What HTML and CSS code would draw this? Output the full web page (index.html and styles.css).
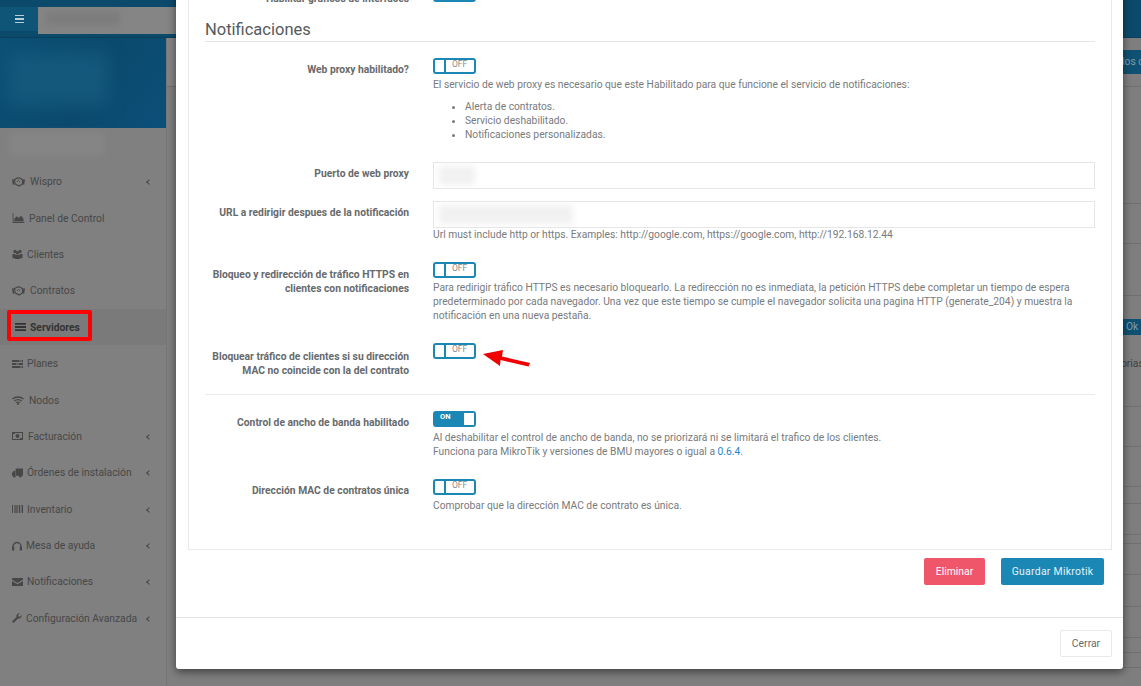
FILE: index.html
```html
<!DOCTYPE html>
<html>

<head>
  <title>Mikrotik</title>
  <link rel="stylesheet" href="styles.css">
</head>

<body>

  <div class="page">
    <div class="topbar">
      <div class="burger"><span></span><span></span><span></span></div>
      <div class="search"><div class="search-blur"></div></div>
    </div>
    <div class="page-body">
      <div class="sidebar">
        <div class="hero"><div class="hero-glow"></div></div>
        <div class="user-blur"></div>
        <ul class="menu">
          <li class="menu-item">
            <svg class="ico ico-w" viewBox="0 0 16 12"><path d="M0 3l2-.5 1 6.5-2 .5zM16 3l-2-.5-1 6.5 2 .5z" /><path d="M3 3c2-1 3-2 5-2s3 1 5 2v5l-4 3-5-2.500z" fill="none" stroke="currentColor" stroke-width="1.400" /><path d="M6 6l2-2 2 2" fill="none" stroke="currentColor" stroke-width="1.200" /></svg>
            <span class="menu-text">Wispro</span><span class="chev"></span>
          </li>
          <li class="menu-item">
            <svg class="ico ico-p" viewBox="0 0 14 12"><path d="M0 0h1v10.500h13V12H0z" /><path d="M2 10V7l3-3 2.500 2L10 3l3 4v3z" /></svg>
            <span class="menu-text">Panel de Control</span>
          </li>
          <li class="menu-item">
            <svg class="ico ico-n" viewBox="0 0 12 12"><circle cx="3" cy="3" r="2" /><circle cx="9" cy="3" r="2" /><circle cx="6" cy="4.500" r="2" /><path d="M0 6h3v5H0zM9 6h3v5H9zM3 7h6v5H3z" /></svg>
            <span class="menu-text">Clientes</span>
          </li>
          <li class="menu-item">
            <svg class="ico ico-w" viewBox="0 0 16 12"><path d="M0 3l2-.5 1 6.5-2 .5zM16 3l-2-.5-1 6.5 2 .5z" /><path d="M3 3c2-1 3-2 5-2s3 1 5 2v5l-4 3-5-2.500z" fill="none" stroke="currentColor" stroke-width="1.400" /><path d="M6 6l2-2 2 2" fill="none" stroke="currentColor" stroke-width="1.200" /></svg>
            <span class="menu-text">Contratos</span>
          </li>
          <li class="menu-item menu-active">
            <svg class="ico ico-s" viewBox="0 0 11 8"><path d="M0 0h11v1.800H0zM0 3.100h11v1.800H0zM0 6.200h11V8H0z" /></svg>
            <span class="menu-text">Servidores</span>
            <div class="red-box"></div>
          </li>
          <li class="menu-item">
            <svg class="ico ico-n" viewBox="0 0 11 8"><path d="M0 0h11v2H0zM0 3h11v2H0zM0 6h11v2H0z" /><path d="M7 .5h3v1H7zM4 3.500h3v1H4zM8 6.500h2v1H8z" fill="#808080" /></svg>
            <span class="menu-text">Planes</span>
          </li>
          <li class="menu-item">
            <svg class="ico ico-wifi" viewBox="0 0 12 9"><path d="M.5 3C3.500.3 8.500.3 11.500 3M2.300 4.900c2-1.800 5.400-1.800 7.400 0M4 6.700c1-.9 3-.9 4 0" fill="none" stroke="currentColor" stroke-width="1.300" /><circle cx="6" cy="8" r="1" /></svg>
            <span class="menu-text">Nodos</span>
          </li>
          <li class="menu-item">
            <svg class="ico ico-f" viewBox="0 0 11 8"><path fill-rule="evenodd" d="M0 0h11v8H0zM1 1v6h9V1z" /><circle cx="5.500" cy="4" r="2" /><path d="M1 1h2v1H1zM8 6h2v1H8z" /></svg>
            <span class="menu-text">Facturación</span><span class="chev"></span>
          </li>
          <li class="menu-item">
            <svg class="ico ico-n" viewBox="0 0 12 10"><path d="M4 0h8v8H4zM0 5l2-2.500h1.500V8H0z" /><circle cx="2.500" cy="8.500" r="1.400" /><circle cx="9" cy="8.500" r="1.400" /></svg>
            <span class="menu-text">Órdenes de instalación</span><span class="chev"></span>
          </li>
          <li class="menu-item">
            <svg class="ico ico-n" viewBox="0 0 11 8"><path d="M0 0h1v8H0zM2 0h.6v8H2zM3.400 0h1.200v8H3.400zM5.400 0h.6v8h-.6zM6.800 0h1.200v8H6.800zM8.800 0h.6v8h-.6zM10 0h1v8h-1z" /></svg>
            <span class="menu-text">Inventario</span><span class="chev"></span>
          </li>
          <li class="menu-item">
            <svg class="ico ico-h" viewBox="0 0 10 9"><path d="M1 6V5a4 4 0 0 1 8 0v1" fill="none" stroke="currentColor" stroke-width="1.300" /><path d="M0 5h2.200v4H0zM7.800 5H10v4H7.800z" /></svg>
            <span class="menu-text">Mesa de ayuda</span><span class="chev"></span>
          </li>
          <li class="menu-item">
            <svg class="ico ico-n" viewBox="0 0 11 8"><path d="M0 0h11v1.800L5.500 5 0 1.800zM0 3l5.500 3.200L11 3v5H0z" /></svg>
            <span class="menu-text">Notificaciones</span><span class="chev"></span>
          </li>
          <li class="menu-item">
            <svg class="ico ico-h" viewBox="0 0 10 10"><path d="M0 8.500L4.500 4C4 2 5.500 0 8 .3L6.200 2.100l.3 1.400 1.400.3L9.700 2c.3 2.500-1.700 4-3.700 3.500L1.500 10z" /></svg>
            <span class="menu-text">Configuración Avanzada</span><span class="chev"></span>
          </li>
        </ul>
      </div>
      <div class="content">
        <div class="content-head"></div>
        <div class="strip">
          <div class="strip-gap"></div>
          <div class="strip-blue strip-blue-top">los c</div>
          <div class="strip-row h13"></div>
          <div class="strip-row h117"></div>
          <div class="strip-row h40"></div>
          <div class="strip-row h52"></div>
          <div class="strip-space"></div>
          <div class="strip-blue strip-blue-ok">Ok</div>
          <div class="strip-row h50"><span class="strip-text">orias</span></div>
          <div class="strip-row h40"></div>
          <div class="strip-row h40"></div>
          <div class="strip-row h17"></div>
          <div class="strip-row h31"></div>
          <div class="strip-row h9"></div>
          <div class="strip-row h31"></div>
          <div class="strip-row h32"></div>
          <div class="strip-row h31"></div>
          <div class="strip-row h15"></div>
          <div class="strip-row h15"></div>
          <div class="strip-row h33"></div>
        </div>
      </div>
    </div>
  </div>

  <div class="modal">
    <div class="modal-body">
      <div class="panel">
        <div class="clipped-row">
          <div class="label">Habilitar gráficos de interfaces</div>
          <div class="control"><div class="clipped-toggle"></div></div>
        </div>
        <h3 class="section-title">Notificaciones</h3>

        <div class="form-row row-proxy">
          <div class="label">Web proxy habilitado?</div>
          <div class="control">
            <div class="toggle"><span class="toggle-handle"></span><span class="toggle-off">OFF</span></div>
            <p class="help">El servicio de web proxy es necesario que este Habilitado para que funcione el servicio de notificaciones:</p>
            <ul class="help-list">
              <li>Alerta de contratos.</li>
              <li>Servicio deshabilitado.</li>
              <li>Notificaciones personalizadas.</li>
            </ul>
          </div>
        </div>

        <div class="form-row row-port">
          <div class="label label-input">Puerto de web proxy</div>
          <div class="control">
            <div class="input"><div class="blur-text blur-port"></div></div>
          </div>
        </div>

        <div class="form-row row-url">
          <div class="label label-input">URL a redirigir despues de la notificación</div>
          <div class="control">
            <div class="input"><div class="blur-text blur-url"></div></div>
            <p class="help help-tight">Url must include http or https. Examples: http://google.com, https://google.com, http://192.168.12.44</p>
          </div>
        </div>

        <div class="form-row row-https">
          <div class="label">Bloqueo y redirección de tráfico HTTPS en clientes con notificaciones</div>
          <div class="control">
            <div class="toggle"><span class="toggle-handle"></span><span class="toggle-off">OFF</span></div>
            <p class="help">Para redirigir tráfico HTTPS es necesario bloquearlo. La redirección no es inmediata, la petición HTTPS debe completar un tiempo de espera predeterminado por cada navegador. Una vez que este tiempo se cumple el navegador solicita una pagina HTTP (generate_204) y muestra la notificación en una nueva pestaña.</p>
          </div>
        </div>

        <div class="form-row row-mac">
          <div class="label">Bloquear tráfico de clientes si su dirección MAC no coincide con la del contrato</div>
          <div class="control">
            <div class="toggle"><span class="toggle-handle"></span><span class="toggle-off">OFF</span></div>
            <svg class="arrow" viewBox="0 0 48 20"><path d="M0 5L20 1l-1 6.500L47 14l-1.500 3.500L17.500 11 17 17z" fill="#f00000" /></svg>
          </div>
        </div>

        <div class="form-row row-bw">
          <div class="label">Control de ancho de banda habilitado</div>
          <div class="control">
            <div class="toggle toggle-on"><span class="toggle-label-on">ON</span><span class="toggle-handle"></span></div>
            <p class="help">Al deshabilitar el control de ancho de banda, no se priorizará ni se limitará el trafico de los clientes.<br>Funciona para MikroTik y versiones de BMU mayores o igual a <a class="link" href="#">0.6.4</a>.</p>
          </div>
        </div>

        <div class="form-row row-unique">
          <div class="label">Dirección MAC de contratos única</div>
          <div class="control">
            <div class="toggle"><span class="toggle-handle"></span><span class="toggle-off">OFF</span></div>
            <p class="help">Comprobar que la dirección MAC de contrato es única.</p>
          </div>
        </div>
      </div>

      <div class="form-actions">
        <button class="btn btn-danger">Eliminar</button>
        <button class="btn btn-primary">Guardar Mikrotik</button>
      </div>
    </div>
    <div class="modal-footer">
      <button class="btn btn-default">Cerrar</button>
    </div>
  </div>

</body>

</html>
```

FILE: styles.css
```css
* {
  box-sizing: border-box;
  font-family: Roboto, sans-serif;
}

body {
  margin: 0;
  height: 686px;
  overflow: hidden;
  position: relative;
  background-color: #7f7f7f;
}

/* Page behind the modal */
.page {
  height: 686px;
  display: flex;
  flex-direction: column;
}

.topbar {
  flex: none;
  height: 38px;
  background-color: #0c4a6b;
  border-bottom: 1px solid #0a3f5c;
  padding-top: 7px;
  display: flex;
}

.burger {
  width: 38px;
  height: 24px;
  background-color: #0f5577;
  display: flex;
  flex-direction: column;
  align-items: center;
  justify-content: center;
  gap: 2px;
}

.burger span {
  width: 9px;
  height: 1.500px;
  background-color: #b9cdd8;
}

.search {
  width: 300px;
  height: 27px;
  background-color: #858585;
  padding: 5px 8px;
}

.search-blur {
  width: 74px;
  height: 13px;
  background-color: #7c7c7c;
  filter: blur(3px);
}

.page-body {
  flex: 1;
  min-height: 0;
  overflow: hidden;
  display: flex;
}

.sidebar {
  width: 167px;
  background-color: #808080;
  border-right: 1px solid #767676;
}

.hero {
  height: 90px;
  background: linear-gradient(125deg, #0c5075 0%, #0b4a6e 55%, #0c4f78 100%);
  overflow: hidden;
  padding: 15px 8px;
}

.hero-glow {
  width: 100px;
  height: 52px;
  background-color: #14587c;
  filter: blur(8px);
}

.user-blur {
  width: 94px;
  height: 22px;
  margin: 5px 0 0 10px;
  background-color: #858585;
  filter: blur(3px);
}

.menu {
  list-style: none;
  margin: 8px 0 0;
  padding: 0;
}

.menu-item {
  height: 36.400px;
  padding-left: 12px;
  padding-top: 1px;
  display: flex;
  align-items: center;
  gap: 4px;
  color: #474747;
  font-size: 10.300px;
  position: relative;
}

.menu-text {
  white-space: nowrap;
}

.menu-active {
  background-color: #7a7a7a;
  font-weight: bold;
  color: #333333;
  padding-left: 15px;
}

.ico {
  fill: currentColor;
  flex: none;
}

.ico-w {
  width: 13px;
  height: 10px;
  margin-right: 1px;
}

.ico-p {
  width: 13px;
  height: 10px;
}

.ico-n {
  width: 11px;
  height: 10px;
}

.ico-s {
  width: 11px;
  height: 8px;
}

.ico-wifi {
  width: 12px;
  height: 9px;
  margin-right: 1px;
}

.ico-f {
  width: 11px;
  height: 8px;
  margin-right: 1px;
}

.ico-h {
  width: 10px;
  height: 10px;
}

.chev {
  position: absolute;
  left: 147px;
  top: 17px;
  width: 4px;
  height: 4px;
  border-left: 1px solid #474747;
  border-bottom: 1px solid #474747;
  transform: rotate(45deg);
}

.red-box {
  position: absolute;
  left: 7px;
  top: 1px;
  width: 85px;
  height: 31px;
  border: 4px solid #fe0000;
  border-radius: 2px;
}

.content {
  flex: 1;
  display: flex;
  justify-content: flex-end;
}

.content-head {
  flex: 1;
  height: 49px;
  background-color: #858585;
  border-bottom: 1px solid #707070;
}

/* Strip of the page that shows right of the modal */
.strip {
  width: 18px;
  background-color: #7e7e7e;
  color: #3e3e3e;
  font-size: 10.300px;
  overflow: hidden;
}

.strip-row {
  border-bottom: 1px solid #707070;
}

.strip-gap {
  height: 12px;
}

.strip-space {
  height: 23px;
}

.strip-blue {
  background-color: #0f5172;
  color: #7d9fb2;
  white-space: nowrap;
}

.strip-blue-top {
  height: 24px;
  line-height: 24px;
  margin-left: -1px;
}

.strip-blue-ok {
  height: 16px;
  line-height: 16px;
  padding-left: 3px;
}

.strip-text {
  display: block;
  margin: 22px 0 0 -2px;
  white-space: nowrap;
}

.h9 { height: 9px; }
.h13 { height: 13px; }
.h15 { height: 15px; }
.h17 { height: 17px; }
.h31 { height: 31px; }
.h32 { height: 32px; }
.h33 { height: 33px; }
.h40 { height: 40px; }
.h50 { height: 50px; }
.h52 { height: 52px; }
.h117 { height: 117px; }

/* Modal */
.modal {
  position: absolute;
  left: 176px;
  top: -31px;
  width: 947px;
  height: 700px;
  background-color: #ffffff;
  border-radius: 0 0 3px 3px;
  box-shadow: 0 3px 9px rgba(0, 0, 0, 0.5);
  display: flex;
  flex-direction: column;
}

.modal-body {
  flex: 1;
  padding: 0 11px 0 12px;
}

.panel {
  height: 581px;
  border: 1px solid #e7eaec;
  border-top: none;
  padding: 0 16px;
}

.clipped-row {
  height: 44px;
  display: flex;
  gap: 24px;
}

.clipped-row .label {
  padding-top: 23px;
}

.clipped-toggle {
  width: 43px;
  height: 33px;
  background-color: #1b87b5;
  border-radius: 3px;
}

.section-title {
  margin: 0;
  height: 29px;
  padding-top: 4px;
  color: #555a5d;
  font-size: 16.500px;
  font-weight: normal;
  line-height: 25px;
  border-bottom: 1px solid #e5e5e5;
}

.form-row {
  display: flex;
  gap: 24px;
}

.label {
  width: 204px;
  flex: none;
  text-align: right;
  color: #676a6c;
  font-size: 10.300px;
  font-weight: bold;
  line-height: 14px;
  padding-top: 5px;
}

.control {
  flex: 1;
  position: relative;
}

.row-proxy {
  margin-top: 16px;
}

.row-port {
  margin-top: 20px;
}

.row-url {
  margin-top: 12px;
}

.row-https {
  margin-top: 20px;
}

.row-https .label {
  padding-top: 6px;
}

.row-https .help {
  margin-top: 3px;
}

.row-mac {
  margin-top: 20px;
  height: 51px;
}

.row-mac .label {
  padding-top: 7px;
}

.row-bw {
  padding-top: 16px;
  border-top: 1px solid #e7eaec;
}

.row-unique {
  margin-top: 20px;
}

.toggle {
  width: 43px;
  height: 16px;
  border: 2px solid #1b87b5;
  border-radius: 3px;
  display: flex;
  align-items: flex-start;
  background-color: #ffffff;
}

.toggle-handle {
  width: 11px;
  height: 100%;
  border-right: 2px solid #1b87b5;
  flex: none;
}

.toggle-off {
  color: #8a8a8a;
  font-size: 8.500px;
  line-height: 9px;
  margin-left: 6px;
}

.toggle-on {
  justify-content: space-between;
  background-color: #1b87b5;
}

.toggle-on .toggle-handle {
  background-color: #ffffff;
  border-right: none;
  border-left: 1px solid #1b87b5;
}

.toggle-label-on {
  color: #ffffff;
  font-size: 7.500px;
  font-weight: bold;
  line-height: 8px;
  margin-left: 5px;
}

.help {
  margin: 4px 0 0;
  color: #787b7d;
  font-size: 10.280px;
  line-height: 14px;
}

.help-tight {
  margin-top: 0;
}

.help-list {
  margin: 8px 0 0;
  padding-left: 32px;
  color: #787b7d;
  font-size: 10.280px;
  line-height: 14px;
}

.input {
  height: 27px;
  border: 1px solid #e5e6e7;
  padding: 3px 5px;
}

.blur-text {
  height: 19px;
  background-color: #f1f1f1;
  filter: blur(3px);
}

.blur-port {
  width: 36px;
}

.blur-url {
  width: 134px;
}

.link {
  color: #1b87d0;
  text-decoration: none;
}

.arrow {
  position: absolute;
  left: 50px;
  top: 6px;
  width: 48px;
  height: 20px;
}

/* Buttons */
.form-actions {
  display: flex;
  justify-content: flex-end;
  gap: 16px;
  padding: 8px 8px 0 0;
}

.btn {
  font-size: 10.400px;
  height: 27px;
  border-radius: 2px;
  border: 1px solid transparent;
  padding: 0;
}

.btn-danger {
  width: 61px;
  background-color: #f0566a;
  color: #ffffff;
}

.btn-primary {
  width: 103px;
  background-color: #1b87b5;
  color: #e4f2f7;
  letter-spacing: 0.300px;
}

.modal-footer {
  height: 52px;
  border-top: 1px solid #e5e5e5;
  display: flex;
  justify-content: flex-end;
  padding: 12px 11px 0 0;
}

.btn-default {
  width: 52px;
  background-color: #ffffff;
  border-color: #e7eaec;
  color: #676a6c;
}
```
